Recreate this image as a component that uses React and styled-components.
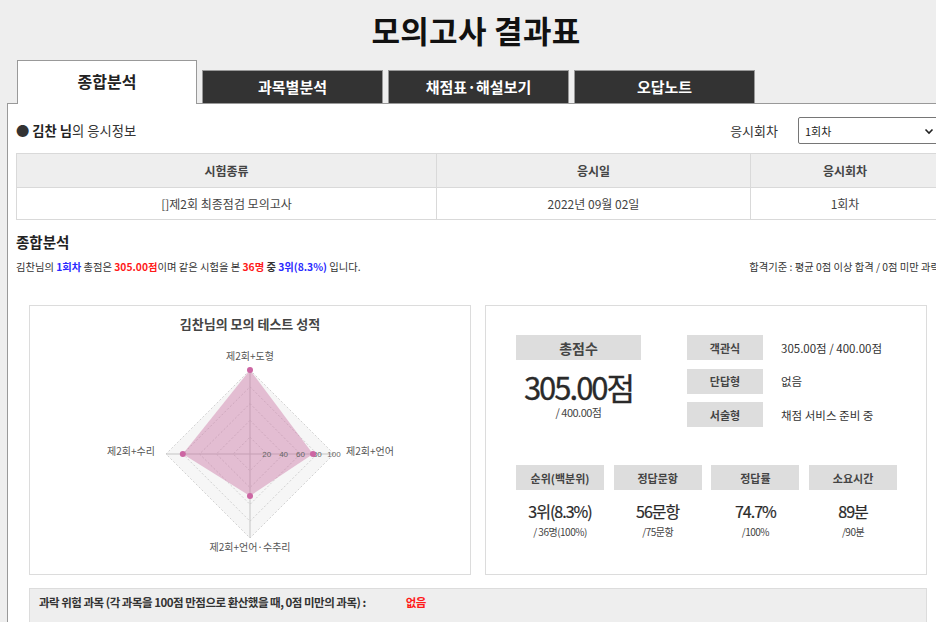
import React from "react";
import styled, { createGlobalStyle } from "styled-components";

const Global = createGlobalStyle`
  html, body { margin: 0; padding: 0; background: #eeeeee; overflow: hidden; }
  body { font-family: "Noto Sans CJK KR", "Noto Sans", sans-serif; color: #333; }
  * { box-sizing: border-box; }
`;

const Page = styled.div`
  width: 936px;
  height: 622px;
  overflow: hidden;
  padding-left: 7px;
`;

const Title = styled.h1`
  margin: 0 0 0 1px;
  width: 936px;
  height: 60px;
  line-height: 60px;
  text-align: center;
  font-size: 31px;
  font-weight: 700;
  color: #111;
  letter-spacing: 0.3px;
`;

const Tabs = styled.div`
  display: flex;
  align-items: flex-end;
  gap: 5px;
  height: 43px;
  padding-left: 10px;
  position: relative;
  z-index: 1;
`;

const Tab = styled.div`
  display: flex;
  align-items: center;
  justify-content: center;
  font-weight: 700;
  padding-bottom: ${(p) => (p.$active ? 3 : 1)}px;
  ${(p) =>
    p.$active
      ? `
    width: 180px; height: 44px; margin-bottom: -1px;
    background: #fff; border: 1px solid #999; border-bottom: none;
    color: #222; font-size: 16px;
  `
      : `
    width: 181px; height: 33px;
    background: #333; border: 1px solid #999; border-bottom: none;
    color: #fff; font-size: 15px;
  `}
`;

const Panel = styled.div`
  width: 945px;
  height: 520px;
  background: #fff;
  border-top: 1px solid #999;
  border-left: 1px solid #999;
  padding-left: 8px;
`;

const Inner = styled.div`
  width: 924px;
`;

const InfoRow = styled.div`
  display: flex;
  align-items: center;
  justify-content: space-between;
  height: 27px;
  margin-top: 13px;
`;

const InfoTitle = styled.div`
  font-size: 13.3px;
  color: #333;
  b { font-weight: 700; color: #222; }
`;

const RoundPick = styled.div`
  display: flex;
  align-items: center;
  gap: 20px;
  font-size: 13px;
  color: #333;
`;

const Select = styled.div`
  width: 142px;
  height: 27px;
  border: 1px solid #767676;
  border-radius: 2px;
  display: flex;
  align-items: center;
  justify-content: space-between;
  padding: 0 5px 0 6px;
  font-size: 11px;
  color: #222;
`;

const Table = styled.table`
  width: 100%;
  margin-top: 9px;
  border-collapse: collapse;
  font-size: 12px;
  th, td { border: 1px solid #d9d9d9; text-align: center; }
  th { background: #eeeeee; height: 34px; font-weight: 700; color: #444; }
  td { height: 32px; color: #444; }
`;

const SectionTitle = styled.h2`
  margin: 11px 0 0;
  font-size: 14.5px;
  font-weight: 700;
  color: #222;
  line-height: 22px;
`;

const Summary = styled.div`
  display: flex;
  justify-content: space-between;
  margin-top: 6px;
  font-size: 10.3px;
  line-height: 16px;
  color: #333;
  white-space: nowrap;
`;

const Hl = styled.span`
  color: ${(p) => (p.$c === "red" ? "#ff1a1a" : "#2a2aff")};
  font-weight: 700;
`;

const Cards = styled.div`
  display: grid;
  grid-template-columns: 442px 442px;
  gap: 14px;
  padding: 0 13px;
  margin-top: 30px;
`;

const Card = styled.div`
  height: 270px;
  border: 1px solid #dcdcdc;
  background: #fff;
`;

const ChartTitle = styled.div`
  height: 36px;
  line-height: 36px;
  text-align: center;
  font-size: 13px;
  font-weight: 700;
  color: #444;
`;

const ScoreCard = styled(Card)`
  padding: 29px 0 0 30px;
`;

const TopGrid = styled.div`
  display: flex;
  gap: 46px;
`;

const TotalCol = styled.div`
  width: 125px;
  display: flex;
  flex-direction: column;
  align-items: center;
`;

const Label = styled.div`
  width: ${(p) => p.$w}px;
  height: 25px;
  background: #dddddd;
  display: flex;
  align-items: center;
  justify-content: center;
  font-size: ${(p) => p.$fs || 11}px;
  font-weight: 700;
  color: #444;
  flex-shrink: 0;
`;

const BigScore = styled.div`
  margin-top: 9px;
  font-size: 31px;
  line-height: 36px;
  color: #2a2a2a;
  letter-spacing: -2px;
  white-space: nowrap;
  -webkit-text-stroke: 0.3px #2a2a2a;
`;

const SubText = styled.div`
  font-size: ${(p) => p.$fs || 10}px;
  color: #444;
  letter-spacing: -0.5px;
  line-height: 14px;
`;

const TypeList = styled.div`
  display: flex;
  flex-direction: column;
  gap: 8.5px;
`;

const TypeRow = styled.div`
  display: flex;
  align-items: center;
  gap: 18px;
  font-size: 11.5px;
  color: #333;
`;

const Stats = styled.div`
  display: grid;
  grid-template-columns: repeat(4, 88px);
  column-gap: 9.7px;
  margin-top: 38px;
`;

const Stat = styled.div`
  display: flex;
  flex-direction: column;
  align-items: center;
`;

const StatValue = styled.div`
  margin-top: 11px;
  font-size: 16px;
  line-height: 20px;
  color: #2a2a2a;
  letter-spacing: -1px;
  -webkit-text-stroke: 0.2px #2a2a2a;
`;

const StatSub = styled(SubText)`
  margin-top: 4px;
`;

const Warn = styled.div`
  margin: 13px 13px 0;
  height: 40px;
  background: #eeeeee;
  border: 1px solid #dcdcdc;
  display: flex;
  align-items: flex-start;
  padding: 5px 0 0 9px;
  gap: 40px;
  font-size: 11.5px;
  font-weight: 700;
  color: #333;
  letter-spacing: -0.5px;
`;

const WarnValue = styled.span`
  color: #ff1a1a;
`;

function Radar() {
  const cx = 220, cy = 112, R = 84;
  const diamond = (r) =>
    `${cx},${cy - r} ${cx + r},${cy} ${cx},${cy + r} ${cx - r},${cy}`;
  const vals = [100, 75, 50, 80];
  const pts = [
    [cx, cy - (R * vals[0]) / 100],
    [cx + (R * vals[1]) / 100, cy],
    [cx, cy + (R * vals[2]) / 100],
    [cx - (R * vals[3]) / 100, cy],
  ];
  return (
    <svg width="440" height="232" viewBox="0 0 440 232">
      <polygon points={diamond(R)} fill="#f6f6f6" />
      {[20, 40, 60, 80, 100].map((v) => (
        <polygon
          key={v}
          points={diamond((R * v) / 100)}
          fill="none"
          stroke="#c8c8c8"
          strokeWidth="0.8"
          strokeDasharray="2 2"
        />
      ))}
      <line x1={cx} y1={cy - R} x2={cx} y2={cy + R} stroke="#c4c4c4" strokeWidth="1" />
      <line x1={cx - R} y1={cy} x2={cx + R} y2={cy} stroke="#c4c4c4" strokeWidth="1" />
      <polygon
        points={pts.map((p) => p.join(",")).join(" ")}
        fill="rgba(200,110,160,0.42)"
      />
      {[20, 40, 60, 80, 100].map((v) => (
        <text
          key={v}
          x={cx + (R * v) / 100}
          y={cy + 3}
          fontSize="8"
          fill="#666"
          textAnchor="middle"
          fontFamily="Liberation Sans, sans-serif"
        >
          {v}
        </text>
      ))}
      {pts.map((p, i) => (
        <circle key={i} cx={p[0]} cy={p[1]} r="3" fill="#cc66a3" />
      ))}
      <g fontSize="10" fill="#555" fontFamily="Noto Sans CJK KR, sans-serif">
        <text x={cx} y={cy - R - 10} textAnchor="middle">제2회+도형</text>
        <text x={cx + R + 12} y={cy + 1} textAnchor="start">제2회+언어</text>
        <text x={cx} y={cy + R + 13} textAnchor="middle">제2회+언어·수추리</text>
        <text x={cx - R - 11} y={cy + 1} textAnchor="end">제2회+수리</text>
      </g>
    </svg>
  );
}

export default function App() {
  return (
    <Page>
      <Global />
      <Title>모의고사 결과표</Title>
      <Tabs>
        <Tab $active>종합분석</Tab>
        <Tab>과목별분석</Tab>
        <Tab>채점표·해설보기</Tab>
        <Tab>오답노트</Tab>
      </Tabs>
      <Panel>
        <Inner>
          <InfoRow>
            <InfoTitle>
              ● <b>김찬 님</b>의 응시정보
            </InfoTitle>
            <RoundPick>
              응시회차
              <Select>
                <span>1회차</span>
                <svg width="10" height="10" viewBox="0 0 10 10">
                  <path d="M1.5 3.5 L5 7 L8.5 3.5" fill="none" stroke="#222" strokeWidth="1.6" />
                </svg>
              </Select>
            </RoundPick>
          </InfoRow>
          <Table>
            <colgroup>
              <col style={{ width: 420 }} />
              <col style={{ width: 314 }} />
              <col />
            </colgroup>
            <thead>
              <tr>
                <th>시험종류</th>
                <th>응시일</th>
                <th>응시회차</th>
              </tr>
            </thead>
            <tbody>
              <tr>
                <td>[]제2회 최종점검 모의고사</td>
                <td>2022년 09월 02일</td>
                <td>1회차</td>
              </tr>
            </tbody>
          </Table>
          <SectionTitle>종합분석</SectionTitle>
          <Summary>
            <span>
              김찬님의 <Hl>1회차</Hl> 총점은 <Hl $c="red">305.00점</Hl>이며 같은 시험을 본{" "}
              <Hl $c="red">36명</Hl> <b>중</b> <Hl>3위(8.3%)</Hl> 입니다.
            </span>
            <span>합격기준 : 평균 0점 이상 합격 / 0점 미만 과락</span>
          </Summary>
          <Cards>
            <Card>
              <ChartTitle>김찬님의 모의 테스트 성적</ChartTitle>
              <Radar />
            </Card>
            <ScoreCard>
              <TopGrid>
                <TotalCol>
                  <Label $w={125} $fs={14}>총점수</Label>
                  <BigScore>305.00점</BigScore>
                  <SubText $fs={11}>/ 400.00점</SubText>
                </TotalCol>
                <TypeList>
                  <TypeRow>
                    <Label $w={76}>객관식</Label>
                    <span>305.00점 / 400.00점</span>
                  </TypeRow>
                  <TypeRow>
                    <Label $w={76}>단답형</Label>
                    <span>없음</span>
                  </TypeRow>
                  <TypeRow>
                    <Label $w={76}>서술형</Label>
                    <span>채점 서비스 준비 중</span>
                  </TypeRow>
                </TypeList>
              </TopGrid>
              <Stats>
                {[
                  ["순위(백분위)", "3위(8.3%)", "/ 36명(100%)"],
                  ["정답문항", "56문항", "/75문항"],
                  ["정답률", "74.7%", "/100%"],
                  ["소요시간", "89분", "/90분"],
                ].map(([l, v, s]) => (
                  <Stat key={l}>
                    <Label $w={88}>{l}</Label>
                    <StatValue>{v}</StatValue>
                    <StatSub>{s}</StatSub>
                  </Stat>
                ))}
              </Stats>
            </ScoreCard>
          </Cards>
          <Warn>
            <span>과락 위험 과목 (각 과목을 100점 만점으로 환산했을 때, 0점 미만의 과목) :</span>
            <WarnValue>없음</WarnValue>
          </Warn>
        </Inner>
      </Panel>
    </Page>
  );
}
